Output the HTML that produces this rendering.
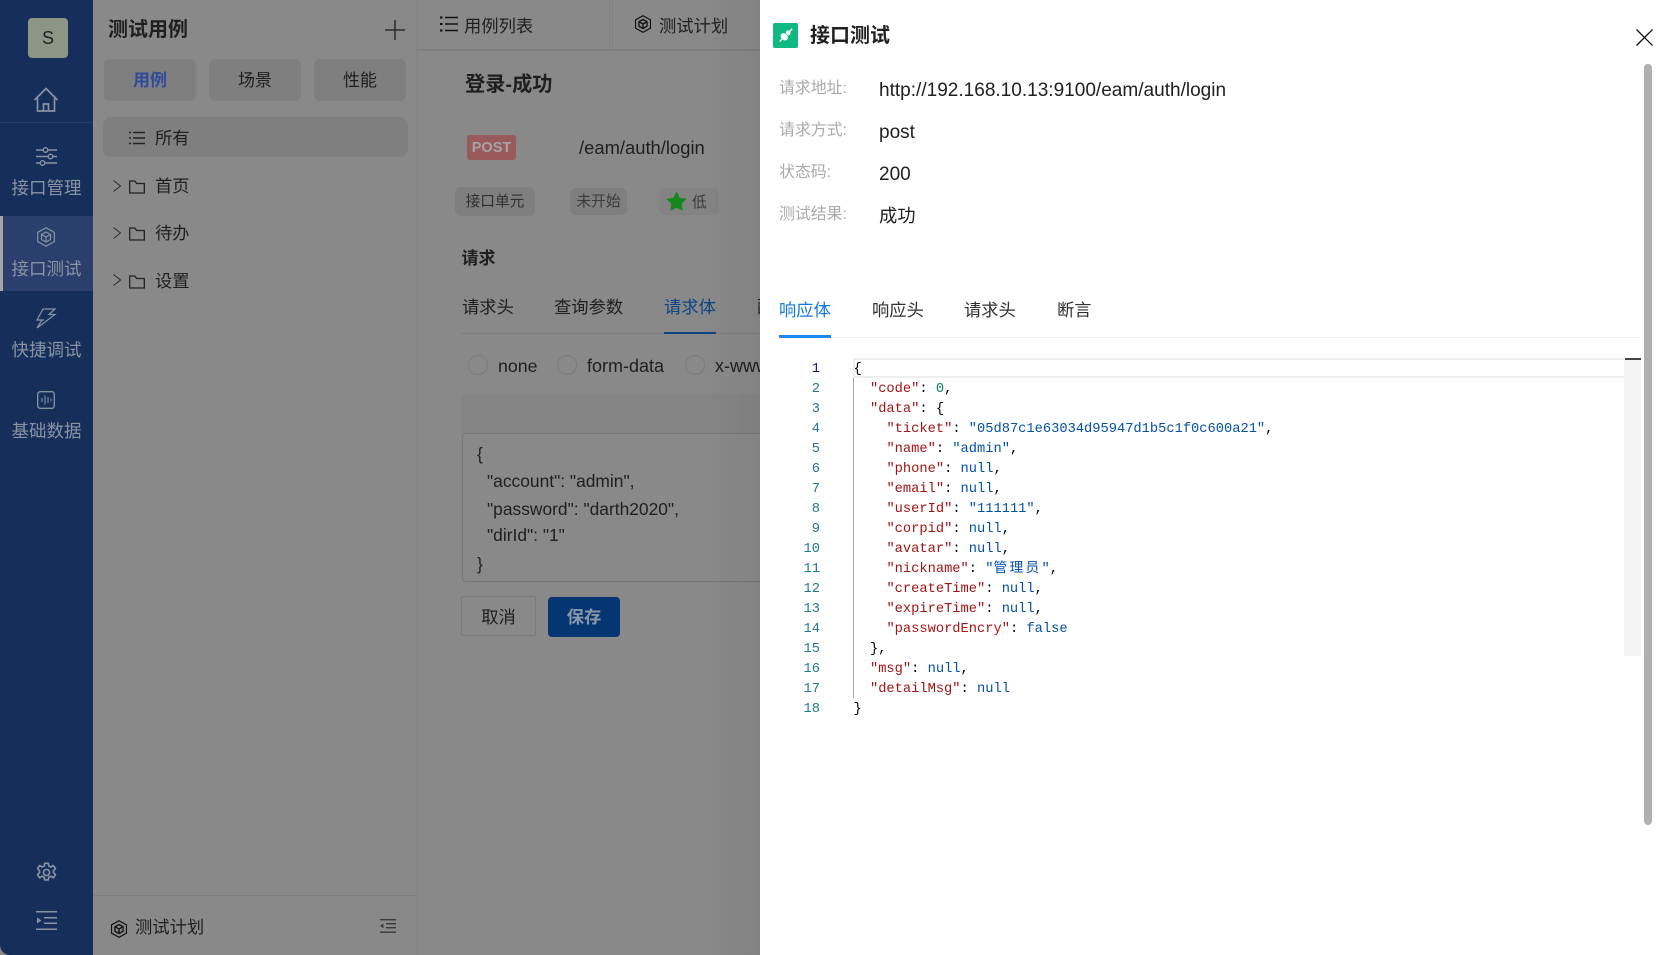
<!DOCTYPE html>
<html lang="zh"><head><meta charset="utf-8"><title>接口测试</title>
<style>
html,body{margin:0;padding:0;width:1660px;height:955px;overflow:hidden;background:#898989}
body{position:relative;font-family:"Liberation Sans","Noto Sans CJK SC",sans-serif;color:#1f1f1f}
.a{position:absolute}
.t{position:absolute;white-space:nowrap;line-height:24px;height:24px}
.side{position:absolute;left:0;top:0;width:93px;height:955px;background:#162e5a;border-bottom-left-radius:10px}
.sl{position:absolute;left:0;width:93px;text-align:center;color:#8a93a3;font-size:17.5px;line-height:24px;white-space:nowrap}
.box{position:absolute;background:#7f7f7f;border-radius:6px;text-align:center}
svg{position:absolute;overflow:visible}
.code{position:absolute;left:853.500px;top:360px;font:13.73px/20px "Liberation Mono","Noto Sans CJK SC",monospace;color:#000;white-space:pre}
.nums{position:absolute;left:790px;width:30px;top:360px;text-align:right;font:13.73px/20px "Liberation Mono",monospace;color:#237893}
.k{color:#a31515}.s{color:#0451a5}.n{color:#098658}
</style></head><body>

<!-- sidebar -->
<div class="side">
  <div class="a" style="left:28px;top:18px;width:40px;height:40px;border-radius:4px;background:#8d9585;color:#222;font-size:18px;line-height:41px;text-align:center">S</div>
  <svg style="left:33px;top:87px" width="26" height="26" viewBox="0 0 26 26" fill="none" stroke="#8a93a3" stroke-width="1.7"><path d="M1.5 13 13 1.500 24.500 13M4.500 11v13h17V11M10.500 24v-7h5v7"/></svg>
  <div class="a" style="left:0;top:122px;width:93px;height:1px;background:#243c68"></div>
  <svg style="left:36px;top:146px" width="21" height="21" viewBox="0 0 21 21" fill="none" stroke="#8a93a3" stroke-width="1.4"><path d="M0 4h7M12 4h9M0 10.500h12M17 10.500h4M0 17h4M9 17h12"/><circle cx="9.500" cy="4" r="2.300"/><circle cx="14.500" cy="10.500" r="2.300"/><circle cx="6.500" cy="17" r="2.300"/></svg>
  <div class="sl" style="top:176px">接口管理</div>
  <div class="a" style="left:0;top:216px;width:93px;height:75px;background:#2a3f6c"></div>
  <div class="a" style="left:0;top:216px;width:3px;height:75px;background:#a5a5a5"></div>
  <svg style="left:36px;top:227px" width="20" height="20" viewBox="0 0 20 20" fill="none" stroke="#8a93a3" stroke-width="1.2"><path d="M10 .8 18.300 5.400v9.200L10 19.200 1.700 14.600V5.400z"/><path d="M10 5 14.500 7.500v5L10 15 5.500 12.500v-5zM5.500 7.500 10 10l4.500-2.500M10 10v5"/></svg>
  <div class="sl" style="top:257px">接口测试</div>
  <svg style="left:36px;top:308px" width="20" height="21" viewBox="0 0 20 21" fill="none" stroke="#8a93a3" stroke-width="1.2"><path d="M7 1h12l-6 5.500h6L1 20l5-8H1zM4 12h4"/></svg>
  <div class="sl" style="top:338px">快捷调试</div>
  <svg style="left:37px;top:391px" width="18" height="18" viewBox="0 0 18 18" fill="none" stroke="#8a93a3" stroke-width="1.3"><rect x=".7" y=".7" width="16.600" height="16.600" rx="2.500"/><path d="M5 7v4M8 4.500v9M11 6v6M14 7.500v3" stroke-width="1"/></svg>
  <div class="sl" style="top:419px">基础数据</div>
  <svg style="left:36px;top:861px" width="21" height="23" viewBox="0 0 24 24" fill="none" stroke="#8a93a3" stroke-width="1.9"><circle cx="12" cy="12" r="3.500"/><path d="M10 1.500h4l.7 3.200 2.300 1 2.800-1.700 2.500 3.500-2.300 2.300v2.400l2.300 2.300-2.500 3.500-2.800-1.700-2.300 1-.7 3.200h-4l-.7-3.200-2.300-1-2.800 1.700-2.500-3.500 2.300-2.300v-2.400L1.700 7.500 4.200 4l2.800 1.700 2.300-1z" stroke-linejoin="round"/></svg>
  <svg style="left:36px;top:911px" width="21" height="19" viewBox="0 0 21 19" fill="#8a93a3"><rect width="21" height="1.500" y="0"/><rect x="8" y="6" width="13" height="1.500"/><rect x="8" y="11.500" width="13" height="1.500"/><rect y="17.500" width="21" height="1.500"/><path d="M1 6.500 5.500 9.500 1 12.500z"/></svg>
</div>

<!-- panel -->
<div class="t" style="left:108px;top:18px;font-size:20px;font-weight:bold">测试用例</div>
<svg style="left:385px;top:20px" width="20" height="20" stroke="#2b2b2b" stroke-width="1.500"><path d="M0 10h20M10 0v20"/></svg>
<div class="box" style="left:104px;top:59px;width:92px;height:42px;line-height:44px;font-size:17px;color:#2e4a9e;font-weight:bold">用例</div>
<div class="box" style="left:209px;top:59px;width:92px;height:42px;line-height:44px;font-size:17px">场景</div>
<div class="box" style="left:314px;top:59px;width:92px;height:42px;line-height:44px;font-size:17px">性能</div>
<div class="a" style="left:103px;top:117px;width:305px;height:40px;border-radius:8px;background:#7f7f7f"></div>
<svg style="left:129px;top:131px" width="16" height="14" stroke="#222" stroke-width="1.400"><path d="M4 1.500h12M4 7h12M4 12.500h12M0 1.500h2M0 7h2M0 12.500h2"/></svg>
<div class="t" style="left:155px;top:126px;font-size:17.300px">所有</div>
<svg style="left:113px;top:180px" width="8" height="12" fill="none" stroke="#2b2b2b" stroke-width="1"><path d="M.5.500 7.500 6 .5 11.500"/></svg>
<svg style="left:129px;top:180px" width="16" height="14" fill="none" stroke="#222" stroke-width="1.300"><path d="M.7 13V1h5l2 2.500h7.600V13z"/></svg>
<div class="t" style="left:155px;top:174px;font-size:17.300px">首页</div>
<svg style="left:113px;top:227px" width="8" height="12" fill="none" stroke="#2b2b2b" stroke-width="1"><path d="M.5.500 7.500 6 .5 11.500"/></svg>
<svg style="left:129px;top:227px" width="16" height="14" fill="none" stroke="#222" stroke-width="1.300"><path d="M.7 13V1h5l2 2.500h7.600V13z"/></svg>
<div class="t" style="left:155px;top:221px;font-size:17.300px">待办</div>
<svg style="left:113px;top:274px" width="8" height="12" fill="none" stroke="#2b2b2b" stroke-width="1"><path d="M.5.500 7.500 6 .5 11.500"/></svg>
<svg style="left:129px;top:275px" width="16" height="14" fill="none" stroke="#222" stroke-width="1.300"><path d="M.7 13V1h5l2 2.500h7.600V13z"/></svg>
<div class="t" style="left:155px;top:269px;font-size:17.300px">设置</div>
<div class="a" style="left:93px;top:895px;width:325px;height:1px;background:#7f7f7f"></div>
<svg style="left:110px;top:920px" width="18" height="18" viewBox="0 0 20 20" fill="none" stroke="#111" stroke-width="1.300"><path d="M10 .8 18.300 5.400v9.200L10 19.200 1.700 14.600V5.400z"/><path d="M10 5 14.500 7.500v5L10 15 5.500 12.500v-5zM5.500 7.500 10 10l4.500-2.500M10 10v5" stroke-width="1.500"/></svg>
<div class="t" style="left:135px;top:915px;font-size:17.300px">测试计划</div>
<svg style="left:380px;top:919px" width="16" height="14" fill="#3a3a3a"><rect width="16" height="1.400"/><rect x="6" y="4" width="10" height="1.400"/><rect x="6" y="8" width="10" height="1.400"/><rect y="12.500" width="16" height="1.400"/><path d="M3.500 4.500 0 6.800l3.500 2.300z"/></svg>
<div class="a" style="left:416px;top:0;width:2px;height:955px;background:#858585"></div>

<!-- main -->
<div class="a" style="left:418px;top:49px;width:342px;height:2px;background:#808080"></div>
<div class="a" style="left:609px;top:0;width:1px;height:49px;background:#838383"></div>
<div class="a" style="left:612px;top:0;width:1px;height:49px;background:#838383"></div>
<svg style="left:440px;top:16px" width="18" height="16" stroke="#111" stroke-width="1.500"><path d="M5 1.500h13M5 8h13M5 14.500h13"/><path d="M0 1.500h2.500M0 8h2.500M0 14.500h2.500" stroke-width="2"/></svg>
<div class="t" style="left:464px;top:14px;font-size:17.300px">用例列表</div>
<svg style="left:634px;top:15px" width="18" height="18" viewBox="0 0 20 20" fill="none" stroke="#111" stroke-width="1.300"><path d="M10 .8 18.300 5.400v9.200L10 19.200 1.700 14.600V5.400z"/><path d="M10 5 14.500 7.500v5L10 15 5.500 12.500v-5zM5.500 7.500 10 10l4.500-2.500M10 10v5" stroke-width="1.500"/></svg>
<div class="t" style="left:659px;top:13.500px;font-size:17.300px">测试计划</div>
<div class="t" style="left:465px;top:73px;font-size:20.200px;font-weight:bold">登录-成功</div>
<div class="a" style="left:467px;top:135px;width:49px;height:25px;border-radius:3px;background:#985a5a;color:#a5a5a5;font-size:14.500px;font-weight:bold;line-height:26px;text-align:center">POST</div>
<div class="t" style="left:579px;top:136px;font-size:18.400px">/eam/auth/login</div>
<div class="box" style="left:455px;top:187px;width:80px;height:29px;line-height:31px;font-size:14.700px;color:#303030">接口单元</div>
<div class="box" style="left:570px;top:188px;width:57px;height:27px;line-height:29px;font-size:14.700px;color:#3a3a3a">未开始</div>
<div class="box" style="left:659px;top:188px;width:60px;height:27px;background:#838383"></div>
<svg style="left:667px;top:192px" width="19" height="19" viewBox="0 0 20 20"><path d="M10 .5 13 6.500 19.700 7.500 14.800 12.200 16 19 10 15.700 4 19 5.200 12.200.3 7.500 7 6.500z" fill="#14881c" stroke="#14881c" stroke-linejoin="round"/></svg>
<div class="t" style="left:692px;top:191px;font-size:14.700px;color:#3a3a3a">低</div>
<div class="t" style="left:461.500px;top:247px;font-size:17px;font-weight:bold">请求</div>
<div class="t" style="left:462px;top:295px;font-size:17.300px">请求头</div>
<div class="t" style="left:554px;top:295px;font-size:17.300px">查询参数</div>
<div class="t" style="left:664px;top:295px;font-size:17.300px;color:#0d4482">请求体</div>
<div class="t" style="left:757px;top:295px;font-size:17.300px">配</div>
<div class="a" style="left:461px;top:333px;width:299px;height:1px;background:#7e7e7e"></div>
<div class="a" style="left:664px;top:332px;width:52px;height:2px;background:#0d4482"></div>
<div class="a" style="left:468px;top:355px;width:18px;height:18px;border:1px solid #7b7b7b;border-radius:50%"></div>
<div class="t" style="left:498px;top:353.500px;font-size:17.800px">none</div>
<div class="a" style="left:557px;top:355px;width:18px;height:18px;border:1px solid #7b7b7b;border-radius:50%"></div>
<div class="t" style="left:587px;top:353.500px;font-size:18px">form-data</div>
<div class="a" style="left:685px;top:355px;width:18px;height:18px;border:1px solid #7b7b7b;border-radius:50%"></div>
<div class="t" style="left:715px;top:353.500px;width:45px;overflow:hidden;font-size:18px">x-www-form</div>
<div class="a" style="left:461px;top:394px;width:299px;height:39px;background:#858585"></div>
<div class="a" style="left:462px;top:433px;width:310px;height:149px;border:1px solid #777;border-radius:4px;box-sizing:border-box"></div>
<div class="t" style="left:477px;top:442px;font-size:17.400px">{</div>
<div class="t" style="left:487px;top:468.500px;font-size:17.400px">"account": "admin",</div>
<div class="t" style="left:487px;top:496.500px;font-size:17.400px">"password": "darth2020",</div>
<div class="t" style="left:487px;top:523px;font-size:17.400px">"dirId": "1"</div>
<div class="t" style="left:477px;top:552px;font-size:17.400px">}</div>
<div class="a" style="left:461px;top:596px;width:75px;height:40px;box-sizing:border-box;border:1px solid #7a7a7a;border-radius:2px;text-align:center;line-height:41px;font-size:17.300px">取消</div>
<div class="a" style="left:548px;top:597px;width:72px;height:40px;background:#053672;border-radius:4px;text-align:center;line-height:41px;font-size:17.300px;font-weight:bold;color:#8a96a8">保存</div>
<div class="a" style="left:700px;top:0;width:60px;height:955px;background:linear-gradient(to right,rgba(0,0,0,0),rgba(0,0,0,.05))"></div>

<!-- drawer -->
<div class="a" style="left:760px;top:0;width:900px;height:955px;background:#fff"></div>
<div class="a" style="left:773px;top:23px;width:25px;height:25px;background:#10b981;border-radius:2px"></div>
<svg style="left:777px;top:27px" width="17" height="17" viewBox="0 0 17 17"><g transform="rotate(45 8.500 8.500)" fill="#fff"><rect x="7.800" y="-1" width="1.400" height="5"/><rect x="6" y="2.800" width="5" height="4" rx="2"/><rect x="4.500" y="7.300" width="8" height="6" rx="3"/><rect x="7.900" y="12" width="1.300" height="5"/></g></svg>
<div class="t" style="left:810px;top:23.500px;font-size:20px;font-weight:bold">接口测试</div>
<svg style="left:1636px;top:28.500px" width="17" height="17" stroke="#111" stroke-width="1.300"><path d="M.5.500 16.500 16.500M16.500.5.500 16.500"/></svg>
<div class="a" style="left:1644px;top:64px;width:8px;height:761px;background:#b0b0b0;border-radius:4px"></div>

<div class="t" style="left:779px;top:76.500px;font-size:15.900px;color:#aaa">请求地址:</div>
<div class="t" style="left:779px;top:118.500px;font-size:15.900px;color:#aaa">请求方式:</div>
<div class="t" style="left:779px;top:160.500px;font-size:15.900px;color:#aaa">状态码:</div>
<div class="t" style="left:779px;top:202.500px;font-size:15.900px;color:#aaa">测试结果:</div>
<div class="t" style="left:879px;top:79px;font-size:19.050px">http://192.168.10.13:9100/eam/auth/login</div>
<div class="t" style="left:879px;top:121px;font-size:19.050px">post</div>
<div class="t" style="left:879px;top:163px;font-size:19.050px">200</div>
<div class="t" style="left:879px;top:203.500px;font-size:18.300px">成功</div>

<div class="t" style="left:779px;top:298px;font-size:17.300px;color:#1677e0">响应体</div>
<div class="t" style="left:872px;top:298px;font-size:17.300px;color:#303030">响应头</div>
<div class="t" style="left:964px;top:298px;font-size:17.300px;color:#303030">请求头</div>
<div class="t" style="left:1057px;top:298px;font-size:17.300px;color:#303030">断言</div>
<div class="a" style="left:779px;top:337px;width:861px;height:1px;background:#f0f0f0"></div>
<div class="a" style="left:779px;top:335px;width:52px;height:3px;background:#1e88f0"></div>

<!-- editor -->
<div class="a" style="left:853px;top:358px;width:788px;height:20px;box-sizing:border-box;border:2px solid #eee;border-right-width:1px"></div>
<div class="a" style="left:1624px;top:358px;width:17px;height:298px;background:#f4f4f4"></div>
<div class="a" style="left:1625px;top:358px;width:16px;height:2px;background:#444"></div>
<div class="a" style="left:853px;top:378px;width:1px;height:320px;background:#aaa"></div>
<div class="nums"><span style="color:#0b216f">1</span><br>2<br>3<br>4<br>5<br>6<br>7<br>8<br>9<br>10<br>11<br>12<br>13<br>14<br>15<br>16<br>17<br>18</div>
<div class="code">{
  <span class="k">"code"</span>: <span class="n">0</span>,
  <span class="k">"data"</span>: {
    <span class="k">"ticket"</span>: <span class="s">"05d87c1e63034d95947d1b5c1f0c600a21"</span>,
    <span class="k">"name"</span>: <span class="s">"admin"</span>,
    <span class="k">"phone"</span>: <span class="s">null</span>,
    <span class="k">"email"</span>: <span class="s">null</span>,
    <span class="k">"userId"</span>: <span class="s">"111111"</span>,
    <span class="k">"corpid"</span>: <span class="s">null</span>,
    <span class="k">"avatar"</span>: <span class="s">null</span>,
    <span class="k">"nickname"</span>: <span class="s">"<span style="letter-spacing:2.300px">管理员</span>"</span>,
    <span class="k">"createTime"</span>: <span class="s">null</span>,
    <span class="k">"expireTime"</span>: <span class="s">null</span>,
    <span class="k">"passwordEncry"</span>: <span class="s">false</span>
  },
  <span class="k">"msg"</span>: <span class="s">null</span>,
  <span class="k">"detailMsg"</span>: <span class="s">null</span>
}</div>
</body></html>
